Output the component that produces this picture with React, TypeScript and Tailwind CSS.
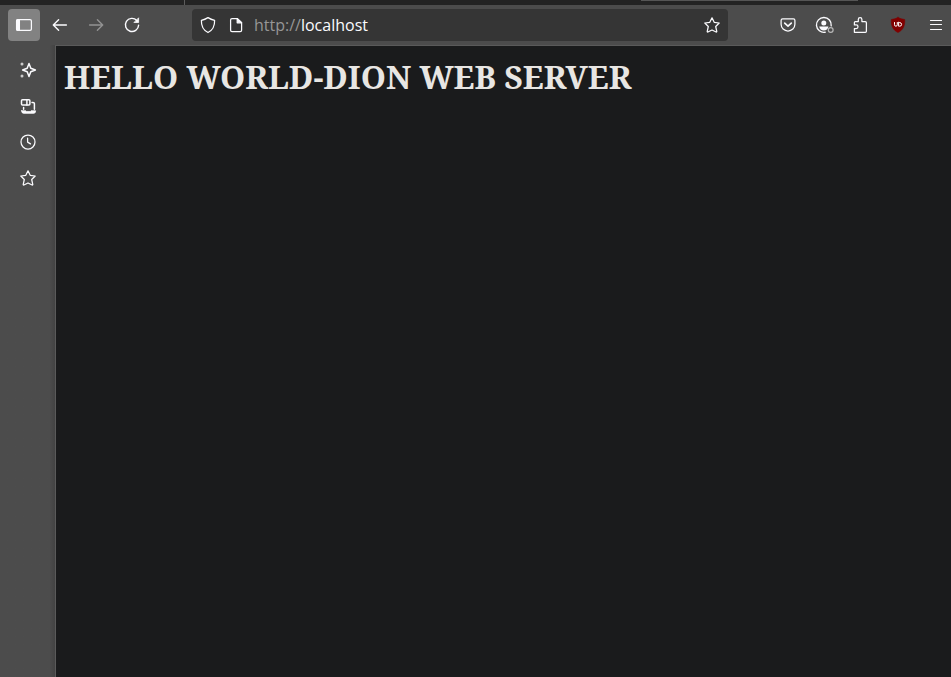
import type { ReactNode } from "react";

function Icon({ children, className = "" }: { children: ReactNode; className?: string }) {
  return (
    <svg
      viewBox="0 0 16 16"
      className={`h-4 w-4 shrink-0 overflow-visible ${className}`}
      fill="none"
      stroke="currentColor"
      strokeWidth="1.25"
      strokeLinecap="round"
      strokeLinejoin="round"
      aria-hidden="true"
    >
      {children}
    </svg>
  );
}

function Tool({ label, className = "w-8", children }: { label: string; className?: string; children: ReactNode }) {
  return (
    <button type="button" aria-label={label} className={`flex h-8 shrink-0 items-center justify-center rounded ${className}`}>
      {children}
    </button>
  );
}

const Star = () => (
  <Icon>
    <path d="M8 .8 10.2 5.3 15.2 6 11.7 9.5 12.8 14.6q0 .7-.7.4L8 13 3.9 15q-.7.3-.7-.4L4.3 9.5.8 6l5-.7Z" />
  </Icon>
);

export default function App() {
  return (
    <div className="flex min-h-screen flex-col bg-[#4c4c4c] font-['Open_Sans','Noto_Sans',sans-serif] text-[#fbfbfe]">
      <div className="flex h-[5px] items-start bg-[#232323]">
        <div className="h-full w-[185px] border-r border-[#5c5c5c]" />
        <div className="ml-auto mr-[93px] h-px w-[217px] bg-[#555555]" />
      </div>

      <nav aria-label="Browser toolbar" className="flex h-10 items-center pl-2">
        <div className="flex gap-1">
          <Tool label="Show sidebar" className="w-8 bg-[#828282]">
            <Icon>
              <rect x=".6" y="2.6" width="14.8" height="10.8" rx="1.4" />
              <path d="M.6 4Q.6 2.6 2 2.6H3.4v10.8H2Q.6 13.4.6 12Z" fill="currentColor" />
            </Icon>
          </Tool>
          <Tool label="Back">
            <Icon>
              <path d="M14.4 8H1.4M6.6 2.7 1.3 8l5.3 5.3" strokeWidth="1.4" />
            </Icon>
          </Tool>
          <Tool label="Forward" className="w-8 text-[#929292]">
            <Icon>
              <path d="M1.6 8h13M9.4 2.7 14.7 8l-5.3 5.3" strokeWidth="1.4" />
            </Icon>
          </Tool>
          <Tool label="Reload">
            <Icon>
              <path d="M12.8 3.4A6.6 6.6 0 1 0 14.6 8.3" strokeWidth="1.4" />
              <path d="M14.6 1.2v4.3h-4.3Z" fill="currentColor" strokeWidth=".8" />
            </Icon>
          </Tool>
        </div>

        <div className="mx-11 flex h-8 min-w-0 flex-1 items-center rounded bg-[#353535] px-2">
          <button type="button" aria-label="Tracking protection">
            <Icon>
              <path d="M8 .6Q11 2.4 14.6 3.4C14.8 8.2 12.8 13.2 8 15.5 3.2 13.2 1.2 8.2 1.4 3.4Q5 2.4 8 .6Z" />
            </Icon>
          </button>
          <button type="button" aria-label="Site information" className="ml-3">
            <Icon>
              <path d="M9.4 1.6H4Q2.6 1.6 2.6 3v10.2q0 1.4 1.4 1.4h8.2q1.4 0 1.4-1.4V5.8Z" />
              <path d="M9.2 1.6v4.2h4.4Z" fill="currentColor" />
            </Icon>
          </button>
          <label htmlFor="address" className="ml-2.5 text-base text-[#969696]">
            http://
          </label>
          <input
            id="address"
            type="text"
            defaultValue="localhost"
            className="min-w-0 flex-1 bg-transparent p-0 text-base outline-none"
          />
          <button type="button" aria-label="Bookmark this page">
            <Star />
          </button>
        </div>

        <div className="flex gap-1">
          <Tool label="Save to Pocket">
            <Icon>
              <path d="M2.6 1.9h10.8q1.5 0 1.5 1.5v3.9a6.9 6.7 0 0 1-13.8 0V3.4q0-1.5 1.5-1.5Z" />
              <path d="M4.7 6.1 8 9.2l3.3-3.1" strokeWidth="1.6" />
            </Icon>
          </Tool>
          <Tool label="Account">
            <Icon>
              <path d="M15.2 8.8A7.4 7.4 0 1 0 9.2 15.2" strokeWidth="1.4" />
              <circle cx="7.8" cy="5.9" r="2.5" fill="currentColor" stroke="none" />
              <path d="M3.2 9.6h9.2q-.8 3.9-4.6 3.9T3.2 9.6Z" fill="currentColor" stroke="none" />
              <circle cx="14.7" cy="13" r="2.4" stroke="#b8b8b8" strokeWidth="1.2" />
            </Icon>
          </Tool>
          <Tool label="Extensions">
            <Icon>
              <path d="M2.4 15.3V11.5h1.8a1.8 1.8 0 0 0 0-3.6H2.4V5.5q0-.9.9-.9h3V2.5a1.8 1.8 0 0 1 3.6 0v2.1h3.4q1.1 0 1.1 1.1v8.6q0 1-1 1Z" />
            </Icon>
          </Tool>
          <Tool label="uBlock Origin" className="w-9">
            <Icon>
              <path d="M8 .5Q11 2.2 14.7 2.5C15 8.6 13.4 12.8 8 15.5 2.6 12.8 1 8.6 1.3 2.5Q5 2.2 8 .5Z" fill="#800000" stroke="#800000" strokeWidth=".6" />
              <path d="M4.5 5.5v2.2q0 1.5 1.4 1.5t1.4-1.5V5.5M8.6 5.5v3.7h1.1q1.9 0 1.9-1.8t-1.9-1.9Z" stroke="#ffffff" strokeWidth="1" />
            </Icon>
          </Tool>
          <Tool label="Open application menu" className="w-[31px]">
            <Icon>
              <path d="M2.5 3.5h11M2.5 7.5h11M2.5 12.5h11" strokeWidth="1.2" />
            </Icon>
          </Tool>
        </div>
      </nav>

      <div className="flex flex-1">
        <aside aria-label="Sidebar" className="flex w-[55px] shrink-0 flex-col items-center gap-1 bg-linear-to-r from-[#4c4c4c] from-90% to-[#434343] pt-[9px]">
          <Tool label="AI chatbot">
            <Icon>
              <path d="M9 1.5 10.8 6.2 15.4 8 10.8 9.8 9 14.5 7.2 9.8 2.6 8 7.2 6.2Z" strokeWidth="1.5" />
              <circle cx="2" cy="2" r="1.5" fill="#cccccc" stroke="none" />
              <circle cx="2" cy="14" r="1.5" fill="#cccccc" stroke="none" />
            </Icon>
          </Tool>
          <Tool label="Synced tabs">
            <Icon>
              <rect x="1.5" y="1.7" width="8.4" height="5.4" rx="1" strokeWidth="1.5" />
              <path d="M6.9 1.7v5.4M12 4.4h1q1.4 0 1.4 1.2v5.6M3.6 9.6v1.6" strokeWidth="1.5" />
              <path d="M1.6 12.8h4.2l.6.8h4l.6-.8h4.6q0 2.5-1.8 2.5H3.4q-1.8 0-1.8-2.5Z" fill="currentColor" strokeWidth=".8" />
            </Icon>
          </Tool>
          <Tool label="History">
            <Icon>
              <circle cx="8" cy="8" r="7" />
              <path d="M7.6 4.2v3.9l2.9 1.8" />
            </Icon>
          </Tool>
          <Tool label="Bookmarks">
            <Star />
          </Tool>
        </aside>
        <main className="min-w-0 flex-1 border-l border-t border-[#5a5a5a] bg-[#1a1b1c] px-2 pt-[9px]">
          <h1 className="font-['Noto_Serif','Liberation_Serif',serif] text-[32px] font-bold leading-[44px] text-[#e8e6e3]">
            HELLO WORLD-DION WEB SERVER
          </h1>
        </main>
      </div>
    </div>
  );
}
